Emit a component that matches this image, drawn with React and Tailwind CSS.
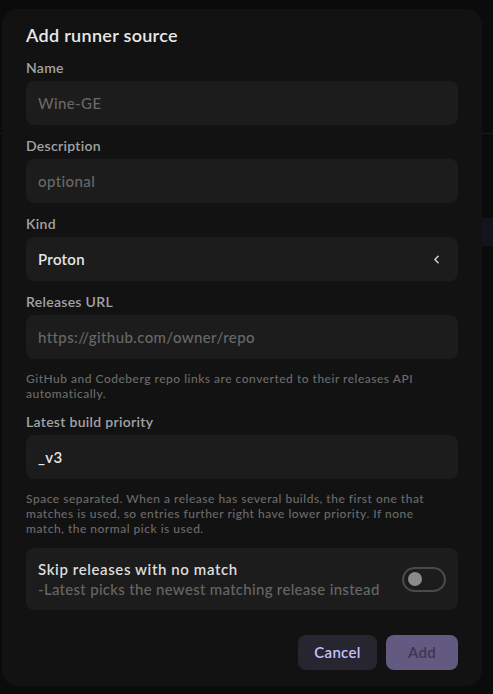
import { ChevronLeft } from "lucide-react";

const font = { fontFamily: "Lato, 'Noto Sans', sans-serif" };

function Field({ label, children }) {
  return (
    <div className="flex flex-col gap-[3px]">
      <label className="text-[14px] leading-5 font-semibold text-[#a3a3a3]">{label}</label>
      {children}
    </div>
  );
}

function TextInput({ value, placeholder }) {
  return (
    <div className="h-[44px] rounded-lg bg-[#1c1c1c] px-3 flex items-center text-[15px] tracking-[0.4px]">
      {value ? (
        <span className="text-[#e6e6e6] font-semibold">{value}</span>
      ) : (
        <span className="text-[#686868] font-medium">{placeholder}</span>
      )}
    </div>
  );
}

function Hint({ children }) {
  return (
    <p className="mt-[12px] pr-[10px] text-[12px] leading-[15px] tracking-[0.5px] text-[#6b6b6b] font-medium">
      {children}
    </p>
  );
}

export default function App() {
  return (
    <div className="relative h-[694px] w-[493px] overflow-hidden bg-[#0b0b0b]" style={font}>
      {/* what peeks out behind the dialog */}
      <div className="pt-[133px]">
        <div className="h-px bg-[#1a1a1a]" />
        <div className="mt-[84px] ml-auto w-[11px] h-[28px] bg-[#15141c] overflow-hidden" />
      </div>

      {/* dialog */}
      <div className="absolute left-[2px] top-[9px] w-[480px] h-[677px] rounded-2xl bg-[#121212] px-6 pt-3 flex flex-col tracking-[0.3px]">
        <h2 className="text-[18px] leading-7 font-semibold text-[#e8e8e8]">Add runner source</h2>

        <div className="mt-[9px] flex flex-col gap-[11px]">
          <Field label="Name">
            <TextInput placeholder="Wine-GE" />
          </Field>
          <Field label="Description">
            <TextInput placeholder="optional" />
          </Field>
          <Field label="Kind">
            <div className="h-[44px] rounded-lg bg-[#1c1c1c] px-3 flex items-center justify-between text-[15px]">
              <span className="text-[#e6e6e6] font-semibold">Proton</span>
              <ChevronLeft size={13} strokeWidth={2.6} className="text-[#d8d8d8] mr-[3px]" />
            </div>
          </Field>
          <div>
            <Field label="Releases URL">
              <TextInput placeholder="https://github.com/owner/repo" />
            </Field>
            <Hint>GitHub and Codeberg repo links are converted to their releases API automatically.</Hint>
          </div>
          <div>
            <Field label="Latest build priority">
              <TextInput value="_v3" />
            </Field>
            <Hint>
              Space separated. When a release has several builds, the first one that matches is used, so entries
              further right have lower priority. If none match, the normal pick is used.
            </Hint>
          </div>
        </div>

        <div className="mt-[12px] h-[62px] rounded-lg bg-[#1c1c1c] px-3 flex items-center justify-between">
          <div className="flex flex-col">
            <span className="text-[15px] leading-5 font-semibold tracking-[0.6px] text-[#dcdcdc]">
              Skip releases with no match
            </span>
            <span className="text-[15px] leading-5 font-medium text-[#666666]">
              -Latest picks the newest matching release instead
            </span>
          </div>
          <div className="w-[44px] h-[25px] rounded-full border-2 border-[#4a4a4a] flex items-center pl-[4px]">
            <div className="w-[14px] h-[14px] rounded-full bg-[#8a8a8a]" />
          </div>
        </div>

        <div className="mt-[25px] flex justify-end gap-[9px]">
          <button className="h-[35px] w-[79px] rounded-lg bg-[#27252f] text-[15px] font-semibold text-[#c6c0ff]">
            Cancel
          </button>
          <button className="h-[35px] w-[72px] rounded-lg bg-[#625a80] text-[15px] font-semibold text-[#3c3752]">
            Add
          </button>
        </div>
      </div>
    </div>
  );
}
